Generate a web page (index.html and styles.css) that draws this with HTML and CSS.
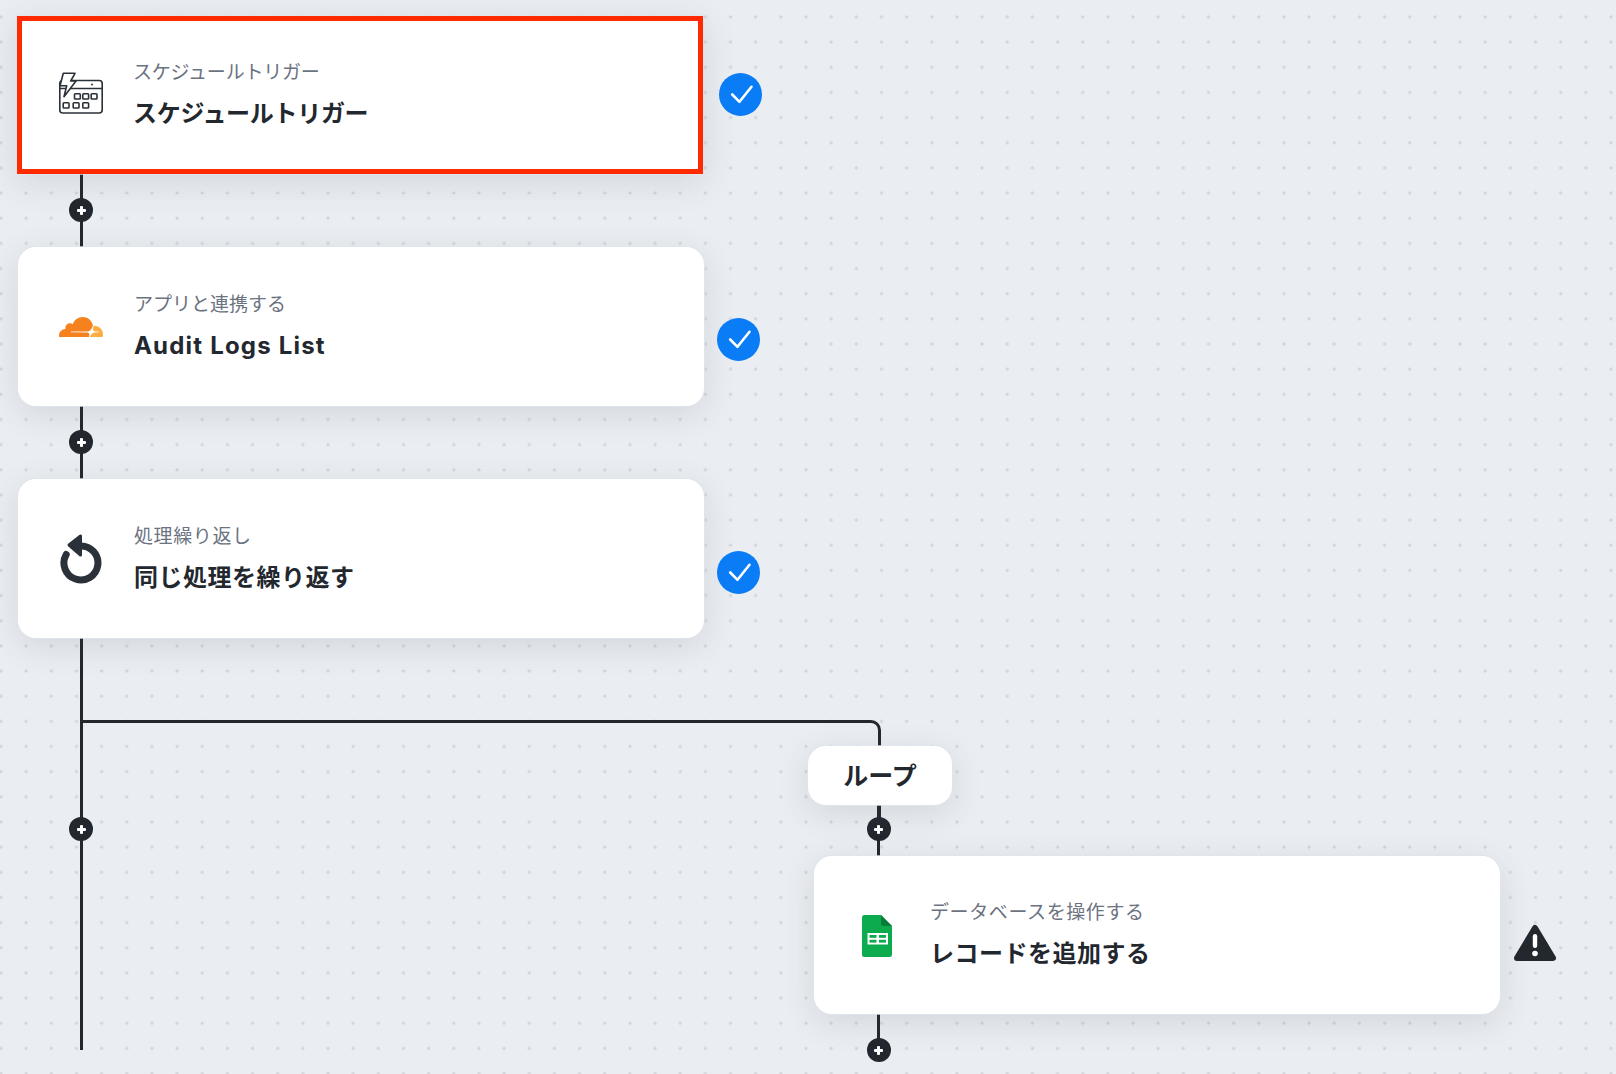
FILE: index.html
```html
<!DOCTYPE html>
<html lang="ja">
<head>
  <meta charset="UTF-8">
  <meta name="viewport" content="width=device-width, initial-scale=1.0">
  <title>フローボット</title>
  <link rel="stylesheet" href="styles.css">
</head>
<body>
  <div class="canvas">
    <!-- connector lines -->
    <div class="line line-main"></div>
    <div class="line-branch"></div>
    <div class="line line-loop-top"></div>
    <div class="line line-loop-bottom"></div>
    <div class="line line-loop-end"></div>

    <span class="add add-1"></span>
    <span class="add add-2"></span>
    <span class="add add-3"></span>
    <span class="add add-4"></span>
    <span class="add add-5"></span>

    <div class="card card-trigger selected">
      <svg class="icon icon-calendar" width="44" height="48" viewBox="0 0 44 48" fill="none" stroke="#2b3138" stroke-width="1.600" stroke-linejoin="round">
        <rect x="0.8" y="9.5" width="42.4" height="32.5" rx="3"/>
        <path d="M1 17.5H43"/>
        <circle cx="33" cy="13.5" r="1" fill="#2b3138" stroke="none"/>
        <path d="M4.3 2.300H16L11.700 10H17L5 25.700L7.700 14.700H1Z" fill="#fff"/>
        <rect x="15.500" y="22.800" width="5.800" height="5.200" rx="0.800"/>
        <rect x="23.800" y="22.800" width="5.800" height="5.200" rx="0.800"/>
        <rect x="32.200" y="22.800" width="5.800" height="5.200" rx="0.800"/>
        <rect x="4.200" y="31.800" width="5.800" height="5.200" rx="0.800"/>
        <rect x="14.200" y="31.800" width="5.800" height="5.200" rx="0.800"/>
        <rect x="23.800" y="31.800" width="5.800" height="5.200" rx="0.800"/>
      </svg>
      <div class="card-text">
        <p class="card-label label-kana">スケジュールトリガー</p>
        <p class="card-title title-kana">スケジュールトリガー</p>
      </div>
    </div>
    <span class="check check-1"><svg width="43" height="43" viewBox="0 0 43 43" fill="none" stroke="#fff" stroke-width="2.600" stroke-linecap="round" stroke-linejoin="round"><path d="M13.200 21.500L20.500 28.800L32.500 13.800"/></svg></span>

    <div class="card card-app">
      <svg class="icon" width="44" height="44" viewBox="0 0 24 24">
        <path fill="#f6821f" d="M16.5088 16.8447c.1475-.5068.0908-.9707-.1553-1.3154-.2246-.3164-.6045-.499-1.0615-.5205l-8.6592-.1123a.1559.1559 0 0 1-.1333-.0713c-.0283-.042-.0351-.0986-.021-.1553.0278-.084.1123-.1484.2036-.1562l8.7359-.1123c1.0351-.0489 2.1601-.8868 2.5537-1.9136l.499-1.3013c.0215-.0561.0293-.1128.0147-.168-.5625-2.5463-2.835-4.4453-5.5499-4.4453-2.5039 0-4.6284 1.6177-5.3876 3.8614-.4927-.3658-1.1187-.5625-1.794-.499-1.2026.119-2.1665 1.083-2.2861 2.2856-.0283.31-.0069.6128.0635.894C1.5683 13.171 0 14.7754 0 16.752c0 .1748.0142.3515.0352.5273.0141.083.0844.1475.1689.1475h15.9814c.0909 0 .1758-.0645.2032-.1553l.12-.4268z"/>
        <path fill="#fbad41" d="M19.2656 11.2813c-.0771 0-.1611 0-.2383.0112-.0566 0-.1054.0415-.127.0976l-.3378 1.1744c-.1475.5068-.0918.9707.1543 1.3164.2256.3164.6055.498 1.0625.5195l1.8437.1133c.0557 0 .1055.0263.1329.0703.0283.043.0351.1074.0214.1562-.0283.084-.1132.1485-.204.1553l-1.921.1123c-1.041.0488-2.1582.8867-2.5527 1.914l-.1406.3585c-.0283.0713.0215.1416.0986.1416h6.5977c.0771 0 .1474-.0489.169-.126.1122-.4082.1757-.837.1757-1.2803 0-2.6025-2.125-4.727-4.7344-4.727"/>
      </svg>
      <div class="card-text text-raised">
        <p class="card-label label-plain">アプリと連携する</p>
        <p class="card-title title-latin">Audit Logs List</p>
      </div>
    </div>
    <span class="check check-2"><svg width="43" height="43" viewBox="0 0 43 43" fill="none" stroke="#fff" stroke-width="2.600" stroke-linecap="round" stroke-linejoin="round"><path d="M13.200 21.500L20.500 28.800L32.500 13.800"/></svg></span>

    <div class="card card-loop">
      <svg class="icon icon-repeat" width="44" height="52" viewBox="0 0 44 52" fill="none">
        <path d="M8.200 22.500A17 17 0 1 0 22 14" stroke="#2b3138" stroke-width="7" stroke-linecap="round"/>
        <path d="M11 13L22.500 4V23Z" fill="#2b3138" stroke="#2b3138" stroke-width="3" stroke-linejoin="round"/>
      </svg>
      <div class="card-text text-raised">
        <p class="card-label">処理繰り返し</p>
        <p class="card-title">同じ処理を繰り返す</p>
      </div>
    </div>
    <span class="check check-3"><svg width="43" height="43" viewBox="0 0 43 43" fill="none" stroke="#fff" stroke-width="2.600" stroke-linecap="round" stroke-linejoin="round"><path d="M13.200 21.500L20.500 28.800L32.500 13.800"/></svg></span>

    <div class="pill">ループ</div>

    <div class="card card-sheet">
      <svg class="icon" width="44" height="44" viewBox="0 0 44 44">
        <path fill="#0cab4e" d="M9.500 2H26L37 13V41.500A2.500 2.500 0 0 1 34.500 44H9.500A2.500 2.500 0 0 1 7 41.500V4.500A2.500 2.500 0 0 1 9.500 2Z"/>
        <path fill="#0a7c3a" d="M26 2L37 13H28.500A2.500 2.500 0 0 1 26 10.500Z"/>
        <rect x="12.500" y="20" width="20.500" height="11.500" fill="#fff"/>
        <rect x="14.500" y="22" width="7" height="2.800" fill="#0cab4e"/>
        <rect x="24" y="22" width="7" height="2.800" fill="#0cab4e"/>
        <rect x="14.500" y="26.800" width="7" height="2.800" fill="#0cab4e"/>
        <rect x="24" y="26.800" width="7" height="2.800" fill="#0cab4e"/>
      </svg>
      <div class="card-text">
        <p class="card-label">データベースを操作する</p>
        <p class="card-title">レコードを追加する</p>
      </div>
    </div>
    <svg class="warning" width="44" height="40" viewBox="0 0 44 40">
      <path fill="#23282f" stroke="#23282f" stroke-width="6" stroke-linejoin="round" d="M22 5L40 35H4Z"/>
      <rect x="19.800" y="11" width="4.400" height="14" rx="2.200" fill="#fff"/>
      <circle cx="22" cy="30.500" r="2.800" fill="#fff"/>
    </svg>
  </div>
</body>
</html>
```

FILE: styles.css
```css
* {
  box-sizing: border-box;
}
body {
  margin: 0;
  font-family: Inter, "Noto Sans CJK JP", sans-serif;
  color: #23282f;
  background-color: #eaedf1;
}
.canvas {
  position: relative;
  width: 1616px;
  height: 1074px;
  overflow: hidden;
  background-image: radial-gradient(circle, #d2d6dc 0, #d2d6dc 1.2px, transparent 2px);
  background-size: 25.17px 25.17px;
  background-position: -11.6px 4.4px;
}

/* connectors */
.line {
  position: absolute;
  width: 3.5px;
  background-color: #23282f;
}
.line-main {
  left: 79.700px;
  top: 170px;
  height: 880px;
}
.line-branch {
  position: absolute;
  left: 83px;
  top: 720px;
  width: 798px;
  height: 30px;
  border-top: 3.500px solid #23282f;
  border-right: 3.500px solid #23282f;
  border-top-right-radius: 10px;
}
.line-loop-top {
  left: 877px;
  top: 800px;
  height: 30px;
}
.line-loop-bottom {
  left: 876.500px;
  top: 830px;
  height: 30px;
}
.line-loop-end {
  left: 876.500px;
  top: 1010px;
  height: 40px;
}
.add {
  position: absolute;
  width: 24px;
  height: 24px;
  border-radius: 50%;
  background-color: #23282f;
}
.add::before,
.add::after {
  content: "";
  position: absolute;
  background-color: #fff;
  border-radius: 1px;
}
.add::before {
  left: 7.500px;
  top: 10.500px;
  width: 9px;
  height: 3px;
}
.add::after {
  left: 10.500px;
  top: 7.500px;
  width: 3px;
  height: 9px;
}
.add-1 { left: 69px; top: 198px; }
.add-2 { left: 69px; top: 430px; }
.add-3 { left: 69px; top: 817px; }
.add-4 { left: 866.500px; top: 817px; }
.add-5 { left: 866.500px; top: 1038px; }

/* nodes */
.card {
  position: absolute;
  display: flex;
  align-items: center;
  gap: 31px;
  width: 686px;
  height: 158px;
  padding-left: 41px;
  background-color: #fff;
  border-radius: 18px;
  box-shadow: 0 0 0 1px rgba(225, 229, 236, 0.7), 0 8px 32px rgba(70, 80, 100, 0.14);
}
.card-trigger { left: 17px; top: 16px; }
.card-app { left: 18px; top: 247px; height: 159px; }
.card-loop { left: 18px; top: 479px; height: 159px; }
.card-sheet { left: 814px; top: 856px; }
.selected {
  padding-left: 37px;
  padding-bottom: 5px;
  border: 5px solid #ff2a00;
  border-radius: 0;
  gap: 30px;
}
.selected .card-text {
  margin-top: 1px;
}
.icon {
  flex-shrink: 0;
}
.icon-calendar {
  margin-top: 5px;
}
.icon-repeat {
  margin-left: -1px;
  margin-right: 1px;
  margin-top: -1px;
}
.card-text {
  display: flex;
  flex-direction: column;
  gap: 13px;
  margin-top: -3px;
}
.text-raised {
  margin-top: -2px;
}
.card-label {
  margin: 0;
  font-size: 19px;
  line-height: 28px;
  letter-spacing: 0.6px;
  color: #6b7280;
}
.label-kana {
  letter-spacing: -0.2px;
}
.label-plain {
  letter-spacing: 0;
}
.card-title {
  margin: 0;
  font-size: 24px;
  line-height: 28px;
  font-weight: 700;
  letter-spacing: 0.5px;
}
.title-kana {
  letter-spacing: -0.3px;
}
.title-latin {
  letter-spacing: 1.200px;
}
.check {
  position: absolute;
  width: 43px;
  height: 43px;
  border-radius: 50%;
  background-color: #0a7cf5;
}
.check-1 { left: 719px; top: 73px; }
.check-2 { left: 717px; top: 317.500px; }
.check-3 { left: 717px; top: 550.500px; }
.pill {
  position: absolute;
  left: 808px;
  top: 746px;
  display: flex;
  align-items: center;
  justify-content: center;
  width: 144px;
  height: 59px;
  padding-bottom: 3px;
  font-size: 25px;
  font-weight: 600;
  background-color: #fff;
  border-radius: 18px;
  box-shadow: 0 0 0 1px rgba(225, 229, 236, 0.7), 0 8px 32px rgba(70, 80, 100, 0.14);
}
.warning {
  position: absolute;
  left: 1513px;
  top: 923px;
}
```
